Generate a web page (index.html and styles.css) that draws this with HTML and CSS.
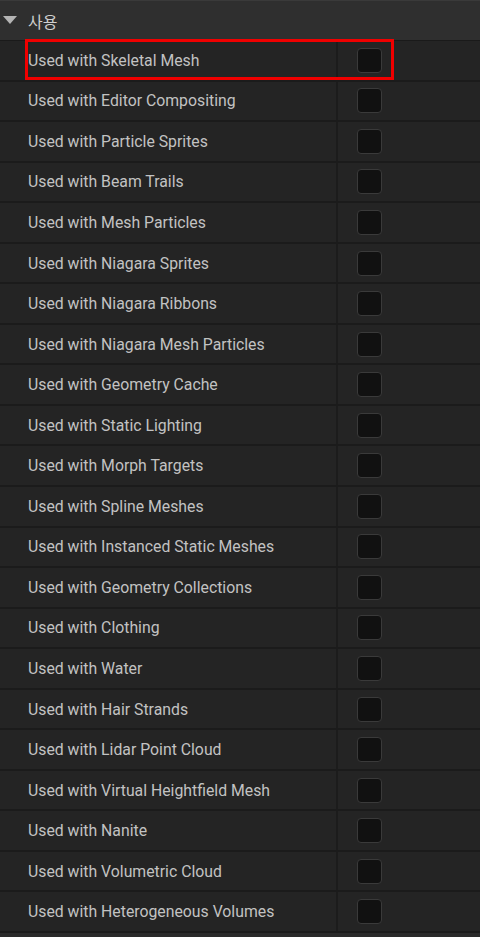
FILE: index.html
```html
<!DOCTYPE html>
<html lang="ko">
<head>
    <meta charset="UTF-8">
    <title>Material Usage</title>
    <link rel="stylesheet" href="styles.css">
</head>
<body>
    <div class="panel">
        <div class="category">
            <svg class="arrow" width="14" height="9" viewBox="0 0 14 9"><path d="M0 0 H14 L7 8 Z" fill="#b4b4b4"/></svg>
            <span class="category-title">사용</span>
        </div>
        <div class="rows">
            <div class="row selected"><div class="name">Used with Skeletal Mesh</div><div class="value"><span class="check"></span></div></div>
            <div class="row"><div class="name">Used with Editor Compositing</div><div class="value"><span class="check"></span></div></div>
            <div class="row"><div class="name">Used with Particle Sprites</div><div class="value"><span class="check"></span></div></div>
            <div class="row"><div class="name">Used with Beam Trails</div><div class="value"><span class="check"></span></div></div>
            <div class="row"><div class="name">Used with Mesh Particles</div><div class="value"><span class="check"></span></div></div>
            <div class="row"><div class="name">Used with Niagara Sprites</div><div class="value"><span class="check"></span></div></div>
            <div class="row"><div class="name">Used with Niagara Ribbons</div><div class="value"><span class="check"></span></div></div>
            <div class="row"><div class="name">Used with Niagara Mesh Particles</div><div class="value"><span class="check"></span></div></div>
            <div class="row"><div class="name">Used with Geometry Cache</div><div class="value"><span class="check"></span></div></div>
            <div class="row"><div class="name">Used with Static Lighting</div><div class="value"><span class="check"></span></div></div>
            <div class="row"><div class="name">Used with Morph Targets</div><div class="value"><span class="check"></span></div></div>
            <div class="row"><div class="name">Used with Spline Meshes</div><div class="value"><span class="check"></span></div></div>
            <div class="row"><div class="name">Used with Instanced Static Meshes</div><div class="value"><span class="check"></span></div></div>
            <div class="row"><div class="name">Used with Geometry Collections</div><div class="value"><span class="check"></span></div></div>
            <div class="row"><div class="name">Used with Clothing</div><div class="value"><span class="check"></span></div></div>
            <div class="row"><div class="name">Used with Water</div><div class="value"><span class="check"></span></div></div>
            <div class="row"><div class="name">Used with Hair Strands</div><div class="value"><span class="check"></span></div></div>
            <div class="row"><div class="name">Used with Lidar Point Cloud</div><div class="value"><span class="check"></span></div></div>
            <div class="row"><div class="name">Used with Virtual Heightfield Mesh</div><div class="value"><span class="check"></span></div></div>
            <div class="row"><div class="name">Used with Nanite</div><div class="value"><span class="check"></span></div></div>
            <div class="row"><div class="name">Used with Volumetric Cloud</div><div class="value"><span class="check"></span></div></div>
            <div class="row"><div class="name">Used with Heterogeneous Volumes</div><div class="value"><span class="check"></span></div></div>
        </div>
    </div>
</body>
</html>
```

FILE: styles.css
```css
body {
    margin: 0;
    background: #2a2a2a;
    font-family: Roboto, "Noto Sans CJK KR", sans-serif;
    color: #c2c2c2;
    overflow: hidden;
}
.panel {
    width: 480px;
}
.category {
    height: 39px;
    display: flex;
    align-items: center;
    background: #2f2f2f;
    border-top: 1px solid #3a3a3a;
    border-bottom: 1px solid #1a1a1a;
}
.arrow {
    margin-left: 3px;
    margin-right: 11px;
}
.category-title {
    font-family: "Noto Sans CJK KR", sans-serif;
    font-size: 16px;
    color: #cfcfcf;
}
.row {
    display: flex;
    height: 38.55px;
    background: #242424;
    border-bottom: 2px solid #1b1b1b;
    position: relative;
}
.name {
    width: 338px;
    padding-left: 28px;
    box-sizing: border-box;
    display: flex;
    align-items: center;
    font-size: 15.8px;
    border-right: 2px solid #1c1c1c;
}
.value {
    flex: 1;
    display: flex;
    align-items: center;
    padding-left: 19px;
}
.check {
    width: 23px;
    height: 23px;
    background: #111111;
    border: 1px solid #3a3a3a;
    border-radius: 4px;
}
.selected::after {
    content: "";
    position: absolute;
    left: 25px;
    top: -2px;
    width: 363px;
    height: 35px;
    border: 3px solid #f00000;
}
```
